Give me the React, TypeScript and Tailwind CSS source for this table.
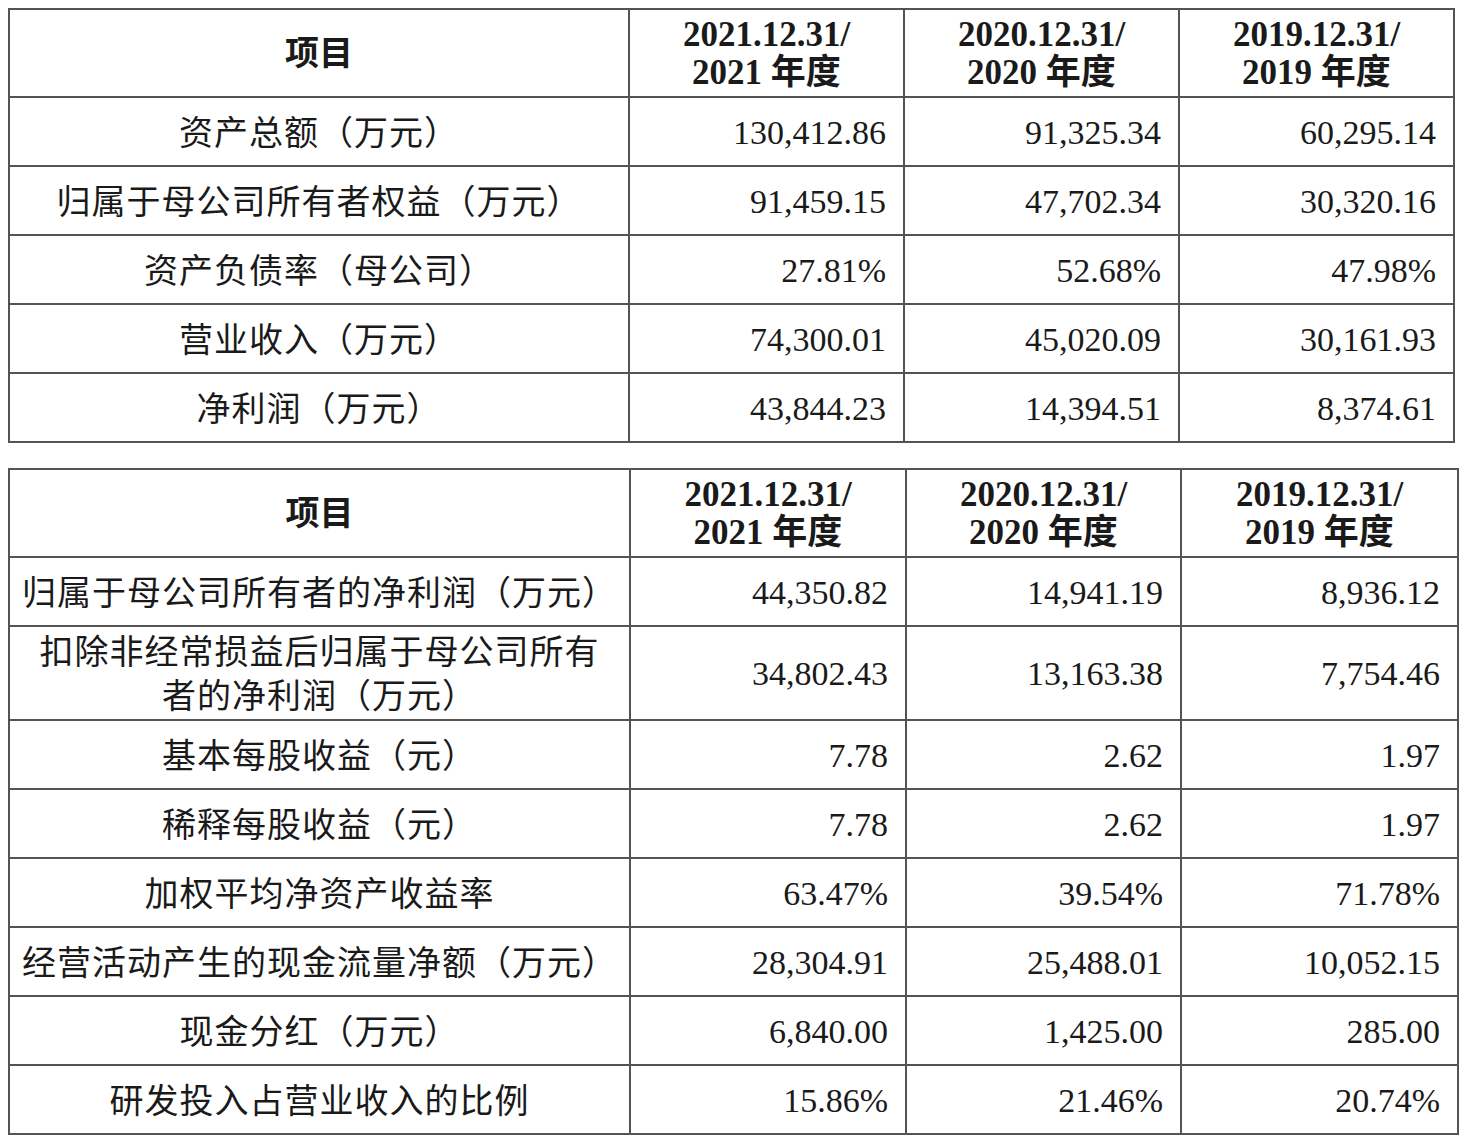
import type { ReactNode } from 'react';

// Two stacked financial summary tables (key figures, 2019–2021)

type Row = { label: ReactNode; values: [string, string, string]; tall?: boolean };

const FIRST_ROWS: Row[] = [
  { label: '资产总额（万元）', values: ['130,412.86', '91,325.34', '60,295.14'] },
  { label: '归属于母公司所有者权益（万元）', values: ['91,459.15', '47,702.34', '30,320.16'] },
  { label: '资产负债率（母公司）', values: ['27.81%', '52.68%', '47.98%'] },
  { label: '营业收入（万元）', values: ['74,300.01', '45,020.09', '30,161.93'] },
  { label: '净利润（万元）', values: ['43,844.23', '14,394.51', '8,374.61'] },
];

const SECOND_ROWS: Row[] = [
  { label: '归属于母公司所有者的净利润（万元）', values: ['44,350.82', '14,941.19', '8,936.12'] },
  {
    label: (
      <>
        扣除非经常损益后归属于母公司所有
        <br />
        者的净利润（万元）
      </>
    ),
    values: ['34,802.43', '13,163.38', '7,754.46'],
    tall: true,
  },
  { label: '基本每股收益（元）', values: ['7.78', '2.62', '1.97'] },
  { label: '稀释每股收益（元）', values: ['7.78', '2.62', '1.97'] },
  { label: '加权平均净资产收益率', values: ['63.47%', '39.54%', '71.78%'] },
  { label: '经营活动产生的现金流量净额（万元）', values: ['28,304.91', '25,488.01', '10,052.15'] },
  { label: '现金分红（万元）', values: ['6,840.00', '1,425.00', '285.00'] },
  { label: '研发投入占营业收入的比例', values: ['15.86%', '21.46%', '20.74%'] },
];

const YEARS = ['2021', '2020', '2019'];

const FONT = "[font-family:'Liberation_Serif','Noto_Sans_CJK_SC',serif]";

function SummaryTable({ rows, widths }: { rows: Row[]; widths: number[] }) {
  const total = widths.reduce((a, b) => a + b, 0);
  return (
    <table
      className={`table-fixed border-collapse border-2 border-[#545454] text-[#1a1a1a] ${FONT}`}
      style={{ width: total }}
    >
      <colgroup>
        {widths.map((w, i) => (
          <col key={i} style={{ width: w }} />
        ))}
      </colgroup>
      <thead>
        <tr className="h-[88px]">
          <th className="border-2 border-[#545454] text-center align-middle text-[34px] font-bold">
            项目
          </th>
          {YEARS.map(y => (
            <th
              key={y}
              className="border-2 border-[#545454] pt-[2px] text-center align-middle text-[35px] leading-[38px] font-bold"
            >
              {y}.12.31/
              <br />
              {y} 年度
            </th>
          ))}
        </tr>
      </thead>
      <tbody>
        {rows.map((row, i) => (
          <tr key={i} className={row.tall ? 'h-[93px]' : 'h-[69px]'}>
            <td
              className={`border-2 border-[#545454] px-0 pt-[4px] text-center align-middle text-[34px] tracking-[1px] whitespace-nowrap font-normal ${
                row.tall ? 'leading-[44px]' : 'leading-[44px]'
              }`}
            >
              {row.label}
            </td>
            {row.values.map((v, j) => (
              <td
                key={j}
                className="border-2 border-[#545454] pt-[2px] pr-[17px] text-right align-middle text-[34px] leading-[44px]"
              >
                {v}
              </td>
            ))}
          </tr>
        ))}
      </tbody>
    </table>
  );
}

export default function App() {
  return (
    <div className="min-h-screen bg-white pl-[8px] pt-[8px]">
      <div className="flex flex-col gap-[25px]">
        <SummaryTable rows={FIRST_ROWS} widths={[620, 275, 275, 275]} />
        <SummaryTable rows={SECOND_ROWS} widths={[621, 276, 275, 277]} />
      </div>
    </div>
  );
}
